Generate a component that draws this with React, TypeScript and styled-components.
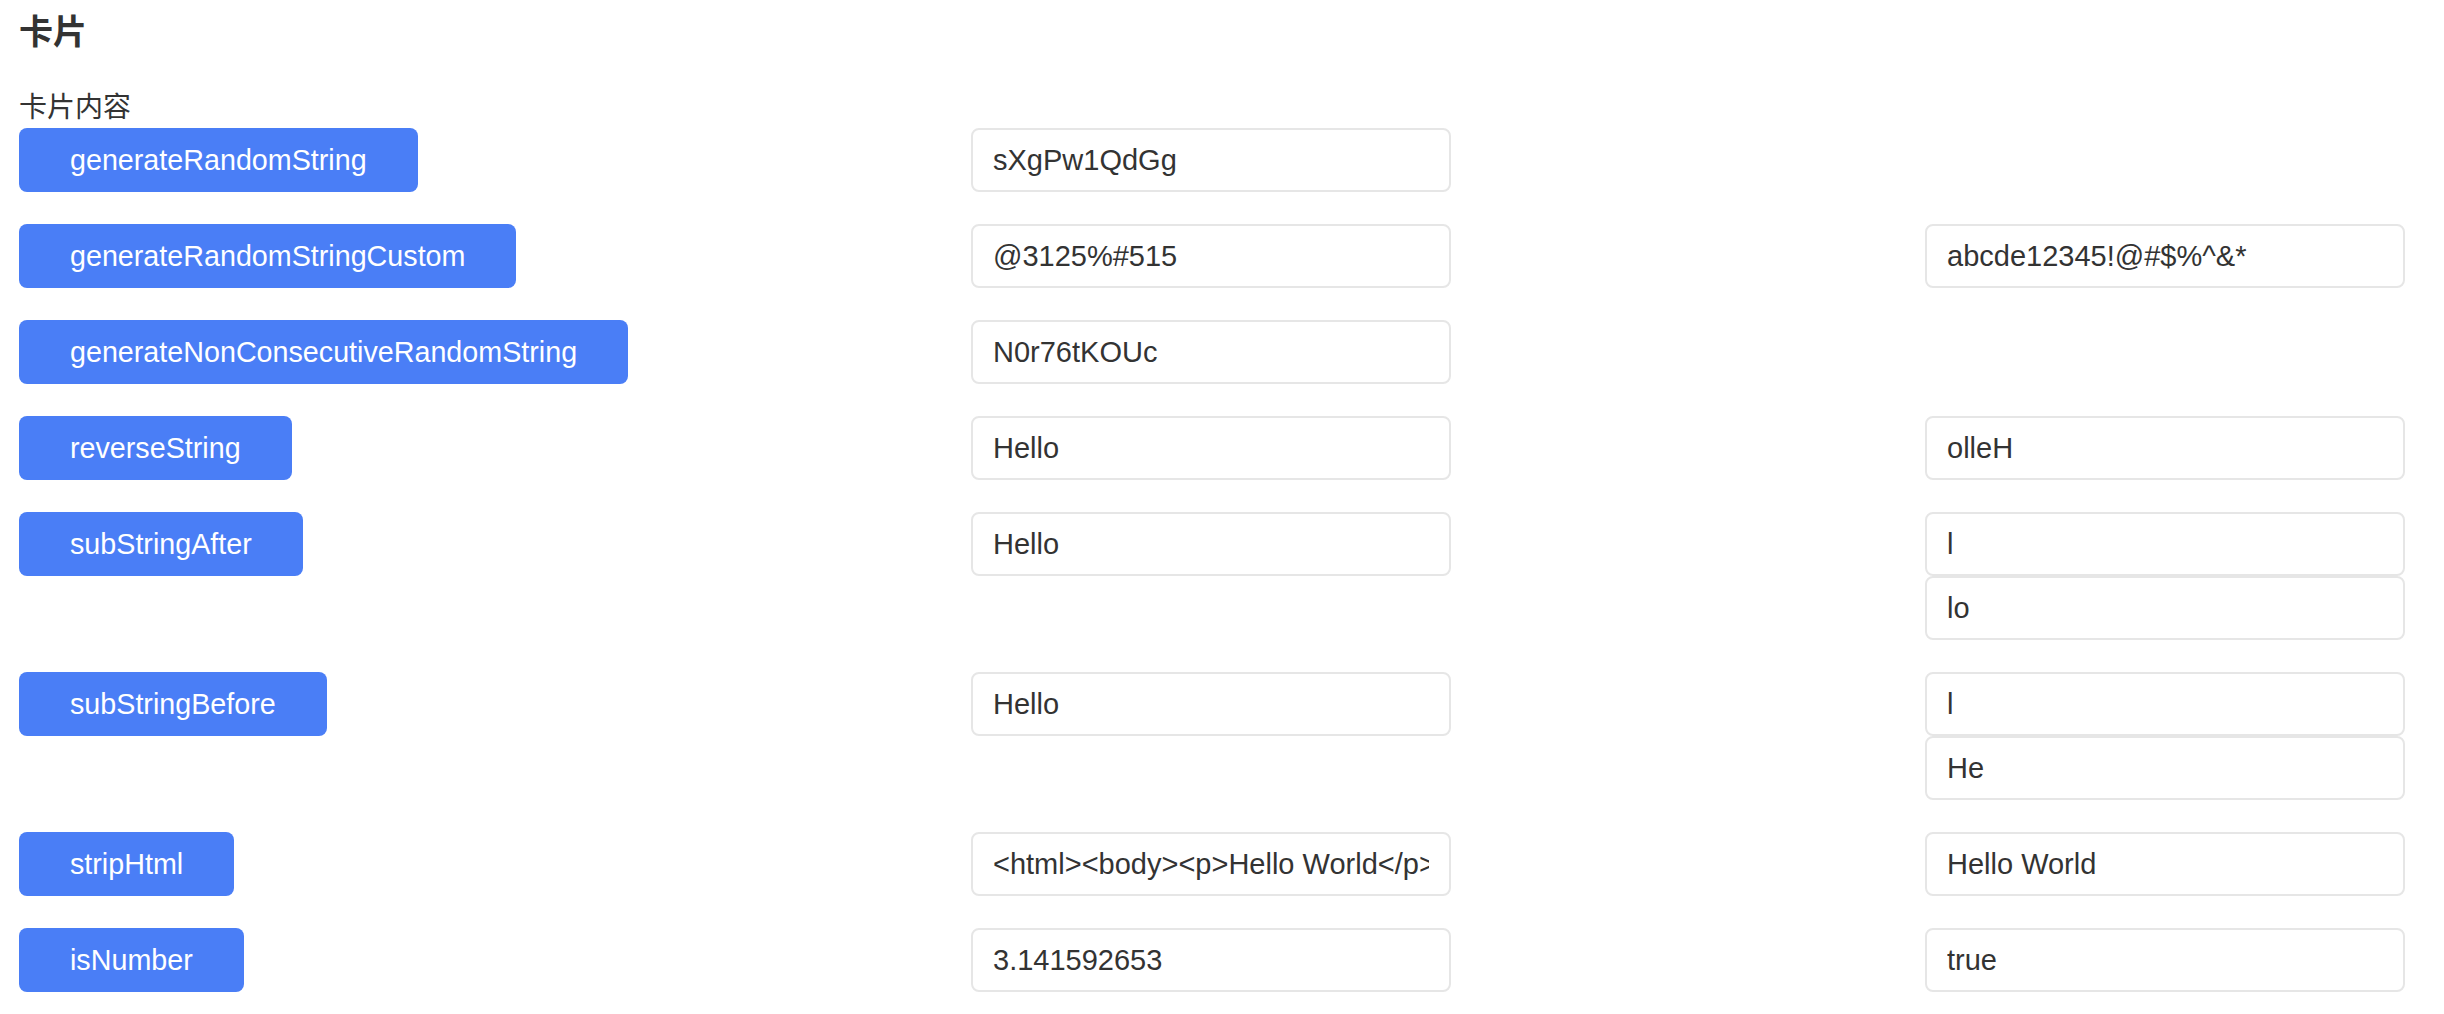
import React from 'react';
import styled, { createGlobalStyle } from 'styled-components';

const GlobalStyle = createGlobalStyle`
  html, body {
    margin: 0;
    padding: 0;
    background: #ffffff;
  }
  body {
    font-family: "Liberation Sans", "Noto Sans CJK SC", sans-serif;
    color: #333333;
  }
`;

const Page = styled.div`
  padding: 7px 0 22px 19px;
`;

const Title = styled.h3`
  margin: 0 0 32px;
  font-size: 34px;
  line-height: 50px;
  font-weight: 700;
  color: #333333;
`;

const Subtitle = styled.div`
  font-size: 28px;
  line-height: 38px;
  margin-bottom: 1px;
  color: #333333;
`;

const List = styled.div`
  display: flex;
  flex-direction: column;
  gap: 32px;
`;

const Row = styled.div`
  display: grid;
  grid-template-columns: 952px 954px 480px;
  align-items: start;
`;

const ActionButton = styled.button`
  justify-self: start;
  height: 64px;
  padding: 0 51px;
  border: none;
  border-radius: 8px;
  background: #4a7ef6;
  color: #ffffff;
  font-family: "Liberation Sans", sans-serif;
  font-size: 28.7px;
  cursor: pointer;
`;

const Stack = styled.div`
  display: flex;
  flex-direction: column;
`;

const Field = styled.input`
  box-sizing: border-box;
  width: 480px;
  height: 64px;
  padding: 0 20px;
  border: 2px solid #e6e6e6;
  border-radius: 8px;
  background: #ffffff;
  color: #333333;
  font-family: "Liberation Sans", sans-serif;
  font-size: 29px;
  outline: none;
`;

type Item = {
  name: string;
  input: string;
  output?: string[];
};

const items: Item[] = [
  { name: 'generateRandomString', input: 'sXgPw1QdGg' },
  { name: 'generateRandomStringCustom', input: '@3125%#515', output: ['abcde12345!@#$%^&*'] },
  { name: 'generateNonConsecutiveRandomString', input: 'N0r76tKOUc' },
  { name: 'reverseString', input: 'Hello', output: ['olleH'] },
  { name: 'subStringAfter', input: 'Hello', output: ['l', 'lo'] },
  { name: 'subStringBefore', input: 'Hello', output: ['l', 'He'] },
  {
    name: 'stripHtml',
    input: '<html><body><p>Hello World</p></body></html>',
    output: ['Hello World'],
  },
  { name: 'isNumber', input: '3.141592653', output: ['true'] },
];

const FuncRow: React.FC<{ item: Item }> = ({ item }) => (
  <Row>
    <ActionButton>{item.name}</ActionButton>
    <Field readOnly defaultValue={item.input} />
    {item.output && (
      <Stack>
        {item.output.map((value, i) => (
          <Field key={i} readOnly defaultValue={value} />
        ))}
      </Stack>
    )}
  </Row>
);

const App: React.FC = () => (
  <>
    <GlobalStyle />
    <Page>
      <Title>卡片</Title>
      <Subtitle>卡片内容</Subtitle>
      <List>
        {items.map((item) => (
          <FuncRow key={item.name} item={item} />
        ))}
      </List>
    </Page>
  </>
);

export default App;
